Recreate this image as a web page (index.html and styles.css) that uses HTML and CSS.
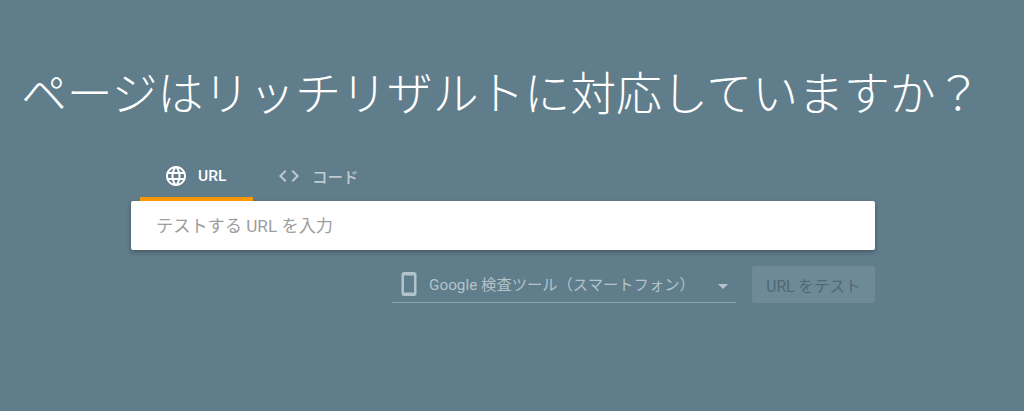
FILE: index.html
```html
<!DOCTYPE html>
<html lang="ja">

<head>
    <meta charset="UTF-8">
    <title>リッチリザルト テスト</title>
    <link rel="stylesheet" href="styles.css">
</head>

<body>
    <h1 class="title">ページはリッチリザルトに対応していますか？</h1>

    <div class="form">
        <div class="tabs">
            <div class="tab tab-active">
                <svg class="tab-icon" viewBox="0 0 24 24" width="24" height="24">
                    <path fill="#fff" d="M11.99 2C6.47 2 2 6.48 2 12s4.47 10 9.99 10C17.52 22 22 17.52 22 12S17.52 2 11.99 2zm6.93 6h-2.95c-.32-1.25-.78-2.45-1.38-3.56 1.84.63 3.37 1.91 4.33 3.56zM12 4.04c.83 1.2 1.48 2.53 1.91 3.96h-3.82c.43-1.43 1.08-2.76 1.91-3.96zM4.26 14C4.1 13.36 4 12.69 4 12s.1-1.36.26-2h3.38c-.08.66-.14 1.32-.14 2s.06 1.34.14 2H4.26zm.82 2h2.95c.32 1.25.78 2.45 1.38 3.56-1.84-.63-3.37-1.9-4.33-3.56zm2.95-8H5.08c.96-1.66 2.49-2.93 4.33-3.56C8.81 5.55 8.35 6.75 8.03 8zM12 19.96c-.83-1.2-1.48-2.53-1.91-3.96h3.82c-.43 1.43-1.08 2.76-1.91 3.96zM14.34 14H9.66c-.09-.66-.16-1.32-.16-2s.07-1.35.16-2h4.68c.09.65.16 1.32.16 2s-.07 1.34-.16 2zm.25 5.56c.6-1.11 1.06-2.31 1.38-3.56h2.95c-.96 1.65-2.49 2.93-4.33 3.56zM16.36 14c.08-.66.14-1.32.14-2s-.06-1.34-.14-2h3.38c.16.64.26 1.31.26 2s-.1 1.36-.26 2h-3.38z"/>
                </svg>
                <span>URL</span>
            </div>
            <div class="tab">
                <svg class="tab-icon" viewBox="0 0 24 24" width="24" height="24">
                    <path fill="#c0cbd1" d="M9.4 16.6L4.800 12l4.600-4.600L8 6l-6 6 6 6 1.400-1.400zm5.200 0l4.600-4.600-4.600-4.600L16 6l6 6-6 6-1.400-1.400z"/>
                </svg>
                <span>コード</span>
            </div>
        </div>

        <div class="url-box">テストする URL を入力</div>

        <div class="controls">
            <div class="device-select">
                <svg class="device-icon" viewBox="0 0 16 24" width="16" height="24">
                    <path fill="#b3c3cc" d="M13 0H3C1.700 0 .5 1 .5 2.300v19.400C.5 23 1.700 24 3 24h10c1.300 0 2.500-1 2.500-2.300V2.300C15.500 1 14.300 0 13 0zm0 20.500H3v-17h10v17z"/>
                </svg>
                <span class="device-label">Google 検査ツール（スマートフォン）</span>
                <span class="arrow"></span>
            </div>
            <button class="test-btn">URL をテスト</button>
        </div>
    </div>
</body>

</html>
```

FILE: styles.css
```css
* {
    margin: 0;
    padding: 0;
    box-sizing: border-box;
}

body {
    min-height: 100vh;
    background-color: #607d8b;
    font-family: Roboto, "Noto Sans CJK JP", sans-serif;
    overflow: hidden;
}

.title {
    padding: 57px 0 0 21px;
    height: 143px;
    font-family: "Noto Sans CJK JP", sans-serif;
    font-size: 45.85px;
    line-height: 66px;
    font-weight: 300;
    color: #fff;
    white-space: nowrap;
}

.form {
    width: 744px;
    margin-left: 131px;
}

.tabs {
    display: flex;
    height: 58px;
    padding-left: 9px;
}

.tab {
    display: flex;
    align-items: center;
    gap: 11px;
    height: 58px;
    padding: 24px 24px 12px;
    font-size: 15.5px;
    font-weight: 500;
    color: #c0cbd1;
    border-bottom: 4px solid transparent;
}

.tab-active {
    width: 113px;
    gap: 10px;
    color: #fff;
    border-bottom-color: #ff9800;
}

.tab-icon {
    flex: none;
}

.url-box {
    height: 49px;
    padding: 0 25px 2px;
    display: flex;
    align-items: center;
    background-color: #fff;
    border-radius: 2px;
    font-size: 17.2px;
    color: #9e9e9e;
    box-shadow: 0 2px 5px rgba(0, 0, 0, 0.3);
}

.controls {
    display: flex;
    justify-content: flex-end;
    gap: 16px;
    margin-top: 16px;
}

.device-select {
    display: flex;
    align-items: center;
    width: 344px;
    height: 37px;
    padding: 0 8px 0 9px;
    border-bottom: 1px solid #8fa5b0;
    color: #b3c3cc;
    font-size: 15.3px;
}

.device-icon {
    flex: none;
    margin-right: 12px;
}

.device-label {
    flex: 1;
    margin-top: -2px;
    white-space: nowrap;
}

.arrow {
    width: 0;
    height: 0;
    margin-top: 5px;
    border-left: 5.5px solid transparent;
    border-right: 5.5px solid transparent;
    border-top: 5.5px solid #b3c3cc;
}

.test-btn {
    width: 123px;
    height: 37px;
    border: none;
    border-radius: 3px;
    background-color: #6f8a97;
    color: #4f6874;
    font-family: inherit;
    font-size: 15.6px;
    font-weight: 400;
}
```
